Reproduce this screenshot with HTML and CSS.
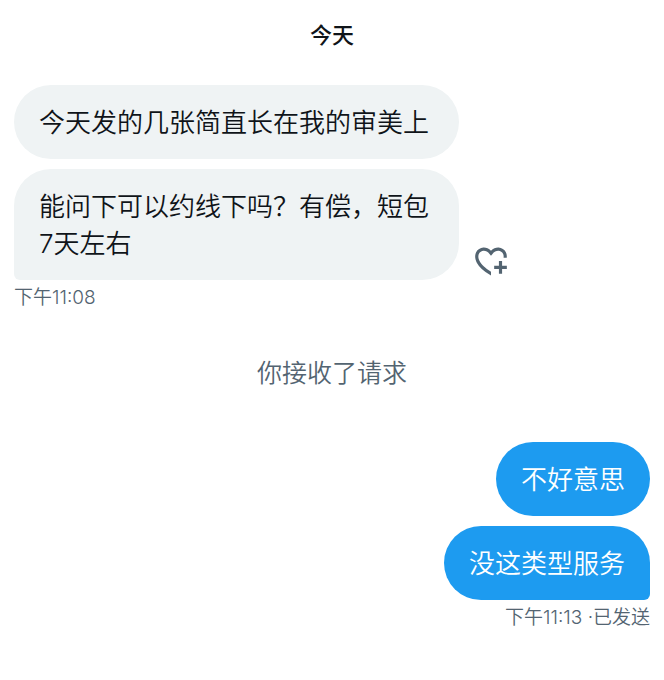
FILE: index.html
```html
<!DOCTYPE html>
<html lang="zh-CN">
<head>
  <meta charset="UTF-8">
  <meta name="viewport" content="width=device-width, initial-scale=1.0">
  <title>私信</title>
  <link rel="stylesheet" href="styles.css">
</head>
<body>
  <main class="chat">
    <h1 class="day">今天</h1>

    <!-- RECEIVED -->
    <section class="group received">
      <div class="row">
        <div class="bubbles">
          <p class="bubble">今天发的几张简直长在我的审美上</p>
          <p class="bubble last">能问下可以约线下吗？有偿，短包7天左右</p>
        </div>
        <button class="react" type="button" aria-label="添加回应">
          <svg viewBox="0 0 24 24" aria-hidden="true">
            <path d="M17 12v3h-2.998v2h3v3h2v-3h3v-2h-3.001v-3H17zm-5 6.839c-3.871-2.34-6.053-4.639-7.127-6.609-1.112-2.04-1.031-3.7-.479-4.82.561-1.13 1.667-1.84 2.91-1.91 1.222-.06 2.68.51 3.892 2.16l.806 1.09.805-1.09c1.211-1.65 2.668-2.22 3.89-2.16 1.242.07 2.347.78 2.908 1.91.334.677.49 1.554.321 2.59h2.011c.153-1.283-.039-2.469-.539-3.48-.887-1.79-2.647-2.91-4.601-3.01-1.65-.09-3.367.56-4.796 2.01-1.43-1.45-3.147-2.1-4.798-2.01-1.954.1-3.714 1.22-4.601 3.01-.896 1.81-.846 4.17.514 6.67 1.353 2.48 4.003 5.12 8.382 7.67l.502.299v-2.32z"/>
          </svg>
        </button>
      </div>
      <div class="meta"><time datetime="23:08">下午11:08</time></div>
    </section>

    <p class="notice">你接收了请求</p>

    <!-- SENT -->
    <section class="group sent">
      <div class="bubbles">
        <p class="bubble">不好意思</p>
        <p class="bubble last">没这类型服务</p>
      </div>
      <div class="meta"><time datetime="23:13">下午11:13</time> ·已发送</div>
    </section>
  </main>
</body>
</html>
```

FILE: styles.css
```css
/* RESET */
* {
  margin: 0;
  padding: 0;
  box-sizing: border-box;
}

body {
  background: #fff;
  color: #0f1419;
  font-family: Inter, "Noto Sans CJK SC", sans-serif;
  font-weight: 350;
}

/* LAYOUT */
.chat {
  padding: 20px 14px;
}

.day {
  margin-bottom: 35px;
  font-size: 22px;
  font-weight: 500;
  line-height: 30px;
  text-align: center;
}

.group {
  display: flex;
  flex-direction: column;
}

.row {
  display: flex;
  align-items: flex-end;
  gap: 13px;
}

/* BUBBLES */
.bubbles {
  display: flex;
  flex-direction: column;
  gap: 10px;
}

.bubble {
  padding: 19px 25px 18px;
  border-radius: 37px;
  font-size: 26px;
  line-height: 37px;
}

.received .bubbles {
  width: 70%;
}

.received .bubble {
  background: #eff3f4;
}

.received .last {
  border-bottom-left-radius: 6px;
}

.sent,
.sent .bubbles {
  align-items: flex-end;
}

.sent .bubble {
  background: #1d9bf0;
  color: #fff;
}

.sent .last {
  border-bottom-right-radius: 6px;
}

/* REACTION BUTTON */
.react {
  width: 38px;
  height: 38px;
  border: none;
  background: none;
  cursor: pointer;
}

.react svg {
  display: block;
  width: 100%;
  height: 100%;
  fill: #536471;
}

/* SMALL TEXT */
.meta {
  padding-top: 5px;
  color: #536471;
  font-size: 19px;
  line-height: 26px;
}

.notice {
  margin: 43px 0 50px;
  color: #536471;
  font-size: 25px;
  line-height: 38px;
  text-align: center;
}
```
